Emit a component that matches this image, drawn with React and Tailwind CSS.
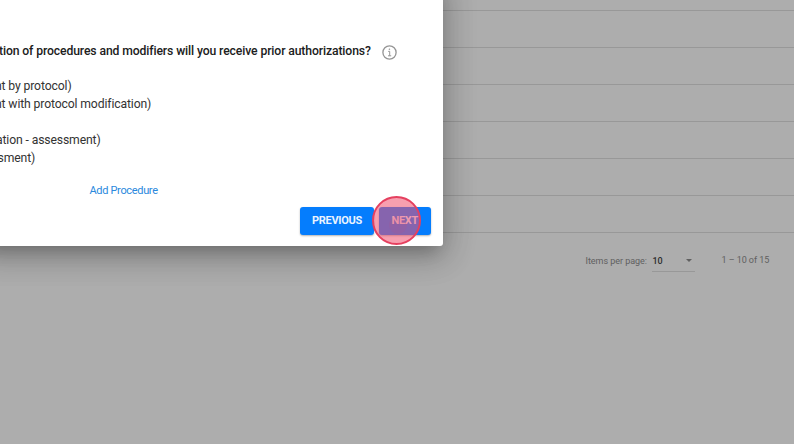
import React from "react";

const rows = ["a", "b", "c", "d", "e", "f"];

function InfoIcon() {
  return (
    <svg className="ml-[11.5px] mt-[2px] size-[15px] shrink-0" viewBox="0 0 15 15" fill="none" stroke="#959595">
      <circle cx="7.5" cy="7.5" r="6.6" strokeWidth="1.3" />
      <path d="M6.2 6.4h1.5v4.4M6 10.8h3.2" strokeWidth="1" />
      <circle cx="7.4" cy="4.2" r="0.5" strokeWidth="0.5" fill="#959595" />
    </svg>
  );
}

function Dialog() {
  return (
    <div className="absolute top-[-20px] left-[-20px] flex h-[265.5px] w-[462.5px] flex-col rounded-[3px] bg-white pl-5 shadow-[0_11px_15px_-7px_rgba(0,0,0,0.2),0_10px_30px_3px_rgba(0,0,0,0.14),0_6px_32px_6px_rgba(0,0,0,0.12)]">
      <div className="mt-[63px] flex h-4 items-center whitespace-nowrap">
        <span className="ml-[-1px] text-[12.2px] font-medium leading-4 tracking-[-0.115px] text-[#202020]">
          tion of procedures and modifiers will you receive prior authorizations?
        </span>
        <InfoIcon />
      </div>
      <div className="mt-[18px] flex flex-col whitespace-nowrap text-[12.2px] leading-[18px] tracking-[-0.13px] text-[#333]">
        <span className="ml-[-5px]">nt by protocol)</span>
        <span className="ml-[-5px]">nt with protocol modification)</span>
        <span className="h-[18px]" />
        <span className="ml-[-4px]">ation - assessment)</span>
        <span className="ml-[-2.5px]">sment)</span>
      </div>
      <button className="mt-[16px] ml-[89.5px] w-fit whitespace-nowrap text-[11px] leading-4 tracking-[-0.33px] text-[#2a88dd]">
        Add Procedure
      </button>
      <div className="mt-[8px] mr-[12px] flex justify-end gap-[5px] text-[11px] font-bold leading-[27px] tracking-[-0.3px] text-[#eaf4ff]">
        <button className="h-[27.5px] w-[74px] rounded-[3px] bg-[#057dfd] shadow-[0_1px_2px_rgba(0,0,0,0.3)]">PREVIOUS</button>
        <button className="h-[27.5px] w-[51.5px] rounded-[3px] bg-[#057dfd] shadow-[0_1px_2px_rgba(0,0,0,0.3)]">NEXT</button>
      </div>
    </div>
  );
}

function Paginator() {
  return (
    <div className="mt-[15px] flex items-start justify-end whitespace-nowrap pr-[25px] text-[9px] leading-[24px] text-[#606060]">
      <span className="mt-px w-[59.5px] tracking-[-0.04px]">Items per page:</span>
      <div className="mt-px ml-[7px] flex h-[23px] w-[43px] items-center justify-between border-b border-[#989898] pr-[3px] text-[#2e2e2e]">
        <span className="pl-[0.5px] pt-px font-medium">10</span>
        <svg className="h-[3px] w-[6px]" viewBox="0 0 6 3">
          <path d="M0 0h6L3 3z" fill="#606060" />
        </svg>
      </div>
      <span className="ml-[26.5px] w-[47.5px] tracking-[-0.06px]">1 – 10 of 15</span>
    </div>
  );
}

export default function App() {
  return (
    <div className="relative h-[444px] w-[794px] overflow-hidden bg-[#adadad] font-['Roboto',sans-serif]">
      <div className="h-[11px] border-b border-[#989898]" />
      {rows.map((r) => (
        <div key={r} className="h-[37px] border-b border-[#989898]" />
      ))}
      <Paginator />
      <Dialog />
      <div className="absolute top-[196px] left-[371.5px] flex size-[49px] items-center justify-center rounded-full border-2 border-[#e5405f] bg-[#f0506e]/55">
        <div className="mt-2 ml-1 size-[18px] rounded-full bg-[#e5405f]/10" />
      </div>
    </div>
  );
}
